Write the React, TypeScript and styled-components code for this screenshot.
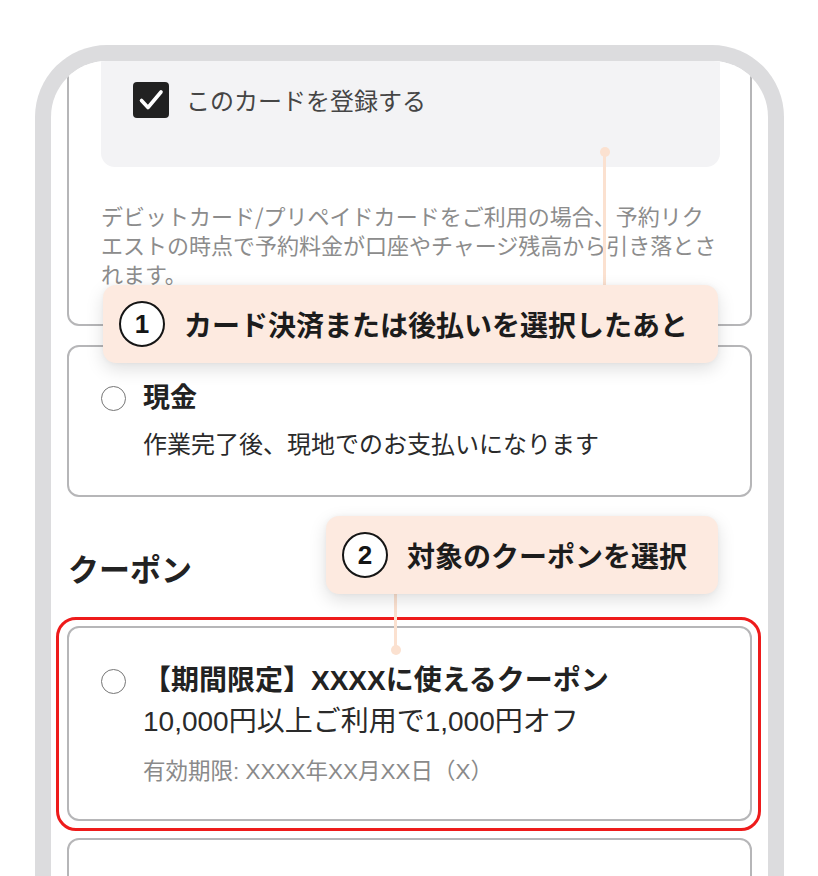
import React from "react";
import styled, { createGlobalStyle } from "styled-components";

const GlobalStyle = createGlobalStyle`
  html, body { margin: 0; padding: 0; background: #ffffff; overflow: hidden; }
  body { font-family: "Noto Sans CJK JP", "Noto Sans", sans-serif; }
  * { box-sizing: border-box; }
`;

const Page = styled.div`
  width: 818px;
  height: 876px;
  padding: 45px 0 0 35px;
  overflow: hidden;
`;

const PhoneFrame = styled.div`
  width: 749px;
  height: 831px;
  border: 16px solid #dcdcde;
  border-bottom: none;
  border-radius: 72px 72px 0 0;
  overflow: hidden;
  background: #ffffff;
`;

const Screen = styled.div`
  position: relative;
  display: flow-root;
  height: 100%;
`;

const Content = styled.div`
  display: flex;
  flex-direction: column;
  padding: 0 16px;
  margin-top: -41px;
`;

const Card = styled.div<{ $pt: number; $pb: number; $mt?: number }>`
  position: relative;
  border: 2px solid #b6b6b8;
  border-radius: 12px;
  background: #ffffff;
  padding: ${(p) => p.$pt}px 30px ${(p) => p.$pb}px 32px;
  margin-top: ${(p) => p.$mt ?? 0}px;
`;

const RegisterPanel = styled.div`
  display: flex;
  align-items: center;
  gap: 17px;
  background: #f3f3f5;
  border-radius: 14px;
  padding: 42px 20px 49px 32px;
`;

const CheckBox = styled.span`
  width: 36px;
  height: 36px;
  flex-shrink: 0;
  border-radius: 4px;
  background: #212121;
  display: flex;
  align-items: center;
  justify-content: center;
`;

const CheckLabel = styled.span`
  font-size: 24px;
  line-height: 36px;
  color: #454545;
`;

const Notice = styled.p`
  margin: 34px 0 0;
  font-size: 22px;
  line-height: 29px;
  color: #8c8c8c;
  white-space: nowrap;
`;

const OptionRow = styled.div`
  display: flex;
  align-items: center;
  gap: 17px;
`;

const Radio = styled.span`
  width: 25px;
  height: 25px;
  flex-shrink: 0;
  border-radius: 50%;
  border: 1.5px solid #767676;
  background: #ffffff;
`;

const OptionTitle = styled.span<{ $size: number }>`
  font-family: "Liberation Sans", "Noto Sans CJK JP", sans-serif;
  font-size: ${(p) => p.$size}px;
  line-height: 34px;
  font-weight: 700;
  color: #222222;
  white-space: nowrap;
`;

const OptionText = styled.div<{ $size: number; $lh: number; $mt: number; $muted?: boolean }>`
  font-family: "Liberation Sans", "Noto Sans CJK JP", sans-serif;
  padding-left: 42px;
  margin-top: ${(p) => p.$mt}px;
  font-size: ${(p) => p.$size}px;
  line-height: ${(p) => p.$lh}px;
  color: ${(p) => (p.$muted ? "#8a8a8a" : "#2a2a2a")};
  white-space: nowrap;
`;

const SectionHeading = styled.h2`
  margin: 51px 0 0;
  padding-left: 1px;
  font-size: 31px;
  line-height: 40px;
  font-weight: 700;
  color: #222222;
`;

const Highlight = styled.div`
  position: absolute;
  top: -11px;
  right: -11px;
  bottom: -12px;
  left: -13px;
  border: 3px solid #ee1b1b;
  border-radius: 20px;
  pointer-events: none;
`;

const EmptyCard = styled.div`
  margin-top: 17px;
  height: 120px;
  border: 2px solid #b6b6b8;
  border-radius: 12px;
`;

const Connector = styled.div<{ $left: number; $top: number; $height: number; $dot: "top" | "bottom" }>`
  position: absolute;
  left: ${(p) => p.$left}px;
  top: ${(p) => p.$top}px;
  width: 3px;
  height: ${(p) => p.$height}px;
  background: #fbe1d0;
  z-index: 2;
  &::after {
    content: "";
    position: absolute;
    left: -3.5px;
    ${(p) => (p.$dot === "top" ? "top: -5px;" : "bottom: -5px;")}
    width: 10px;
    height: 10px;
    border-radius: 50%;
    background: #fbe1d0;
  }
`;

const Callout = styled.div<{ $left: number; $top: number; $width: number }>`
  position: absolute;
  left: ${(p) => p.$left}px;
  top: ${(p) => p.$top}px;
  width: ${(p) => p.$width}px;
  height: 78px;
  z-index: 3;
  display: flex;
  align-items: center;
  gap: 19px;
  padding-left: 16px;
  background: #fdeae0;
  border-radius: 13px;
  box-shadow: 0 6px 18px rgba(0, 0, 0, 0.13), 0 0 5px rgba(0, 0, 0, 0.04);
`;

const StepNumber = styled.span`
  width: 46px;
  height: 46px;
  flex-shrink: 0;
  border-radius: 50%;
  border: 2px solid #151515;
  background: #ffffff;
  display: flex;
  align-items: center;
  justify-content: center;
  font-family: "Liberation Sans", Arial, sans-serif;
  font-weight: 700;
  font-size: 26px;
  color: #151515;
`;

const CalloutText = styled.span`
  font-size: 28px;
  line-height: 36px;
  font-weight: 700;
  color: #1c1c1c;
  white-space: nowrap;
`;

const CheckIcon = () => (
  <svg width="36" height="36" viewBox="0 0 36 36" fill="none">
    <path d="M8.5 18.5 L15 25.5 L28 10" stroke="#ffffff" strokeWidth="3.6" strokeLinecap="round" strokeLinejoin="round" />
  </svg>
);

export default function App() {
  return (
    <>
      <GlobalStyle />
      <Page>
        <PhoneFrame>
          <Screen>
            <Content>
              <Card $pt={18} $pb={36}>
                <RegisterPanel>
                  <CheckBox>
                    <CheckIcon />
                  </CheckBox>
                  <CheckLabel>このカードを登録する</CheckLabel>
                </RegisterPanel>
                <Notice>
                  デビットカード/プリペイドカードをご利用の場合、予約リク
                  <br />
                  エストの時点で予約料金が口座やチャージ残高から引き落とさ
                  <br />
                  れます。
                </Notice>
              </Card>

              <Card $pt={34} $pb={33} $mt={19}>
                <OptionRow>
                  <Radio />
                  <OptionTitle $size={27}>現金</OptionTitle>
                </OptionRow>
                <OptionText $size={24} $lh={34} $mt={13}>
                  作業完了後、現地でのお支払いになります
                </OptionText>
              </Card>

              <SectionHeading>クーポン</SectionHeading>

              <Card $pt={36} $pb={32} $mt={38}>
                <Highlight />
                <OptionRow>
                  <Radio />
                  <OptionTitle $size={28}>【期間限定】XXXXに使えるクーポン</OptionTitle>
                </OptionRow>
                <OptionText $size={28} $lh={34} $mt={7}>
                  10,000円以上ご利用で1,000円オフ
                </OptionText>
                <OptionText $size={22.5} $lh={30} $mt={18} $muted>
                  有効期限: XXXX年XX月XX日（X）
                </OptionText>
              </Card>

              <EmptyCard />
            </Content>

            <Connector $left={552} $top={91} $height={133} $dot="top" />
            <Callout $left={52} $top={224} $width={615}>
              <StepNumber>1</StepNumber>
              <CalloutText>カード決済または後払いを選択したあと</CalloutText>
            </Callout>

            <Connector $left={343} $top={533} $height={56} $dot="bottom" />
            <Callout $left={275} $top={455} $width={392}>
              <StepNumber>2</StepNumber>
              <CalloutText>対象のクーポンを選択</CalloutText>
            </Callout>
          </Screen>
        </PhoneFrame>
      </Page>
    </>
  );
}
